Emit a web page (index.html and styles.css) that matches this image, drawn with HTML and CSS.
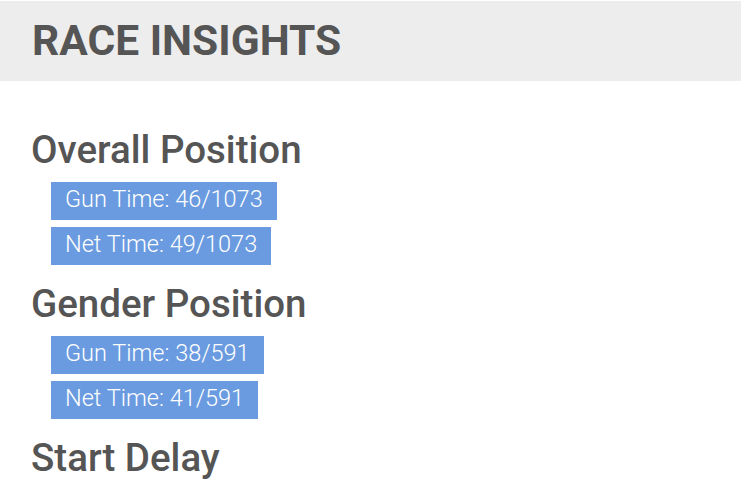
FILE: index.html
```html
<!DOCTYPE html>
<html lang="en">
<head>
    <meta charset="UTF-8">
    <meta name="viewport" content="width=device-width, initial-scale=1.0">
    <title>Race Insights</title>
    <link rel="stylesheet" href="styles.css">
</head>
<body>
    <header>
        <h1>RACE INSIGHTS</h1>
    </header>
    <main>
        <!-- Overall ranking -->
        <h2>Overall Position</h2>
        <div class="badge">Gun Time: 46/1073</div>
        <div class="badge">Net Time: 49/1073</div>

        <!-- Gender ranking -->
        <h2>Gender Position</h2>
        <div class="badge">Gun Time: 38/591</div>
        <div class="badge">Net Time: 41/591</div>

        <h2>Start Delay</h2>
    </main>
</body>
</html>
```

FILE: styles.css
```css
/* Base */
body {
    font-family: Roboto, 'Liberation Sans', sans-serif;
    margin: 0;
    padding: 0;
    background-color: #fff;
    color: #555;
}

/* Header band */
header {
    background-color: #ededed;
    margin-top: 1px;
    height: 80px;
    padding: 0 32px;
}

header h1 {
    margin: 0;
    font-size: 42.5px;
    font-weight: 700;
    line-height: 80px;
}

/* Content */
main {
    padding: 30px 31px 0;
}

h2 {
    margin: 19px 0 12px;
    font-size: 38.5px;
    font-weight: 500;
    line-height: 40px;
}

/* Blue rank tags */
.badge {
    width: fit-content;
    margin: 0 0 7px 20px;
    padding: 0 14px 4px;
    height: 34px;
    line-height: 34px;
    background-color: #6a9be0;
    color: #fff;
    font-size: 23.5px;
    font-weight: 300;
}
```
